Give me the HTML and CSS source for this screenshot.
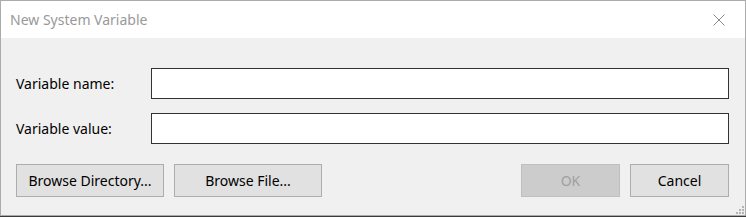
FILE: index.html
```html
<!DOCTYPE html>
<html>
<head>
<meta charset="utf-8">
<link rel="stylesheet" href="styles.css">
</head>
<body>
<div class="window">
  <div class="titlebar">
    <span class="title">New System Variable</span>
    <span class="close">
      <svg width="12" height="12" viewBox="0 0 12 12"><path d="M0.5 0.5 L11.5 11.5 M11.5 0.5 L0.5 11.5" stroke="#8a8a8a" stroke-width="1" fill="none"/></svg>
    </span>
  </div>
  <div class="content">
    <div class="fields">
      <label class="label">Variable name:</label>
      <div class="input"></div>
      <label class="label">Variable value:</label>
      <div class="input"></div>
    </div>
    <div class="buttons">
      <div class="group">
        <div class="btn wide">Browse Directory...</div>
        <div class="btn wide">Browse File...</div>
      </div>
      <div class="group">
        <div class="btn small disabled">OK</div>
        <div class="btn small">Cancel</div>
      </div>
    </div>
    <svg class="grip" width="9" height="9" viewBox="0 0 9 9">
      <rect x="7" y="1" width="2" height="2" fill="#b4b4b4"/>
      <rect x="4" y="4" width="2" height="2" fill="#b4b4b4"/>
      <rect x="7" y="4" width="2" height="2" fill="#b4b4b4"/>
      <rect x="1" y="7" width="2" height="2" fill="#b4b4b4"/>
      <rect x="4" y="7" width="2" height="2" fill="#b4b4b4"/>
      <rect x="7" y="7" width="2" height="2" fill="#b4b4b4"/>
    </svg>
  </div>
</div>
</body>
</html>
```
FILE: styles.css
```css
html, body {
  margin: 0;
  padding: 0;
  background: #3a3a3a;
}
body {
  width: 746px;
  height: 217px;
  overflow: hidden;
  font-family: "Noto Sans", "Open Sans", sans-serif;
  font-size: 14px;
  color: #000;
}
.window {
  width: 746px;
  height: 216px;
  box-sizing: border-box;
  border: 1px solid #ababab;
  display: flex;
  flex-direction: column;
}
.titlebar {
  height: 37px;
  flex: none;
  background: #fff;
  display: flex;
  align-items: center;
  justify-content: space-between;
  padding-left: 9px;
}
.title {
  font-size: 14px;
  color: #999;
}
.close {
  width: 45px;
  height: 37px;
  display: flex;
  align-items: center;
  justify-content: center;
  padding-right: 4px;
}
.content {
  flex: 1;
  background: #f0f0f0;
  padding: 30px 16px 0 15px;
  position: relative;
}
.fields {
  display: grid;
  grid-template-columns: 135px 1fr;
  row-gap: 14px;
  align-items: center;
}
.input {
  height: 31px;
  box-sizing: border-box;
  background: #fff;
  border: 1px solid #333;
}
.buttons {
  display: flex;
  justify-content: space-between;
  margin-top: 20px;
}
.group {
  display: flex;
  gap: 10px;
}
.btn {
  height: 33px;
  box-sizing: border-box;
  background: #e1e1e1;
  border: 1px solid #adadad;
  display: flex;
  align-items: center;
  justify-content: center;
}
.wide { width: 148px; }
.small { width: 99px; }
.disabled {
  background: #cccccc;
  border-color: #bfbfbf;
  color: #a0a0a0;
}
.grip {
  position: absolute;
  right: 1px;
  bottom: 1px;
}
```
